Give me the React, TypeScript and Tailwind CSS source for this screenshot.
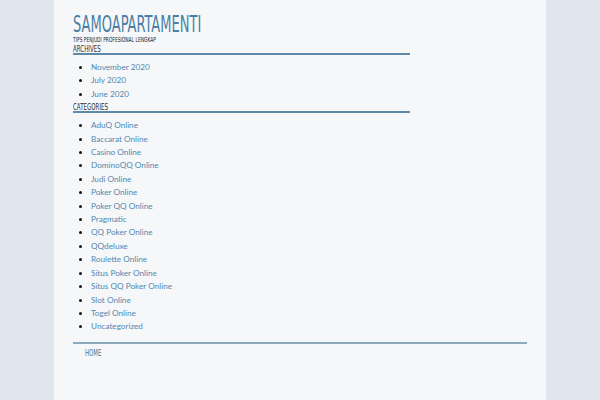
const archives = ["November 2020", "July 2020", "June 2020"];

const categories = [
  "AduQ Online",
  "Baccarat Online",
  "Casino Online",
  "DominoQQ Online",
  "Judi Online",
  "Poker Online",
  "Poker QQ Online",
  "Pragmatic",
  "QQ Poker Online",
  "QQdeluxe",
  "Roulette Online",
  "Situs Poker Online",
  "Situs QQ Poker Online",
  "Slot Online",
  "Togel Online",
  "Uncategorized",
];

// no Oswald offline: condensed face squeezed a bit further
const condensed = { fontFamily: "'DejaVu Sans Condensed', 'Liberation Sans', sans-serif" };
const body = { fontFamily: "Lato, 'Liberation Sans', sans-serif" };

function Widget({ title, items }: { title: string; items: string[] }) {
  return (
    <section className="w-[337px] pb-[2px]">
      <h2 className="border-b-2 border-[#5e8aa7] text-[9px] leading-[8px] text-[#2a2a2a] uppercase whitespace-nowrap">
        <span className="inline-block origin-left scale-x-[0.68]" style={condensed}>
          {title}
        </span>
      </h2>
      <ul className="list-disc pl-[18px] pt-[6px] text-[8.2px] leading-[13.4px] marker:text-[#111]" style={body}>
        {items.map((item) => (
          <li key={item}>
            <a href="#" className="text-[#5287b0]">
              {item}
            </a>
          </li>
        ))}
      </ul>
    </section>
  );
}

export default function App() {
  return (
    <div className="min-h-[400px] bg-[#dfe6ed]">
      <div className="mx-auto w-[492px] min-h-[400px] bg-[#f5f7f9] px-[19px] pt-[12px]">
        <header>
          <h1 className="text-[23px] leading-[22px] text-[#4a7ea4] whitespace-nowrap">
            <span className="inline-block origin-left scale-x-[0.63]" style={condensed}>
              SAMOAPARTAMENTI
            </span>
          </h1>
          <p className="text-[7px] leading-[9px] text-[#222] uppercase whitespace-nowrap">
            <span className="inline-block origin-left scale-x-[0.7]" style={condensed}>
              Tips Penjudi Profesional Lengkap
            </span>
          </p>
        </header>
        <Widget title="Archives" items={archives} />
        <Widget title="Categories" items={categories} />
        <nav className="mt-[6px] border-t-2 border-[#8aa9bd] pt-[4px] pl-[12px] text-[8px] leading-[10px] uppercase">
          <a href="#" className="inline-block origin-left scale-x-[0.75] text-[#4d7590]" style={condensed}>
            Home
          </a>
        </nav>
      </div>
    </div>
  );
}
